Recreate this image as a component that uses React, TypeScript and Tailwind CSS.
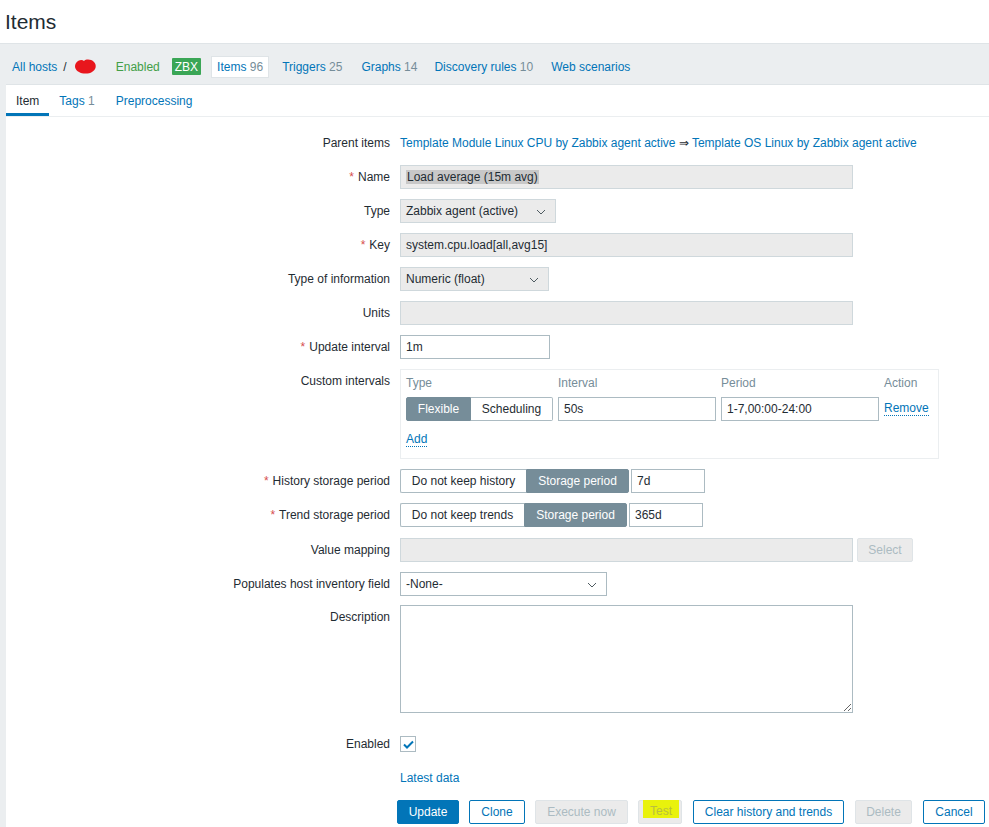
import React from "react";

const Chevron = () => (
  <svg width="10" height="6" viewBox="0 0 10 6" className="absolute right-[9px] top-[9px]">
    <path d="M1 1l4 4 4-4" fill="none" stroke="#4f5b61" strokeWidth="1" />
  </svg>
);

function Label({ text, req }: { text: string; req?: boolean }) {
  return (
    <div className="w-[384px] shrink-0 text-right leading-[24px]">
      {req && <span className="text-[#d64e4e] mr-[4px]">*</span>}
      {text}
    </div>
  );
}

function Row({ label, req, children, className }: { label: string; req?: boolean; children?: React.ReactNode; className?: string }) {
  return (
    <div className={"flex items-start " + (className ?? "")}>
      <Label text={label} req={req} />
      <div className="ml-[10px] flex items-start">{children}</div>
    </div>
  );
}

function ReadInput({ w, children }: { w: string; children?: React.ReactNode }) {
  return (
    <div className={`${w} h-[24px] bg-[#ebebeb] border border-[#cfd8dc] px-[5px] leading-[22px]`}>{children}</div>
  );
}

function Select({ w, value, ro }: { w: string; value: string; ro?: boolean }) {
  return (
    <div
      className={`${w} relative h-[24px] border ${ro ? "bg-[#ebebeb] border-[#cfd8dc]" : "bg-white border-[#acbbc2]"} px-[5px] leading-[22px]`}
    >
      {value}
      <Chevron />
    </div>
  );
}

function Segmented({ left, right, lw, rw }: { left: string; right: string; lw: string; rw: string }) {
  return (
    <div className="flex h-[24px]">
      <div className={`${lw} h-full border border-[#acbbc2] border-r-0 bg-white text-center leading-[22px] rounded-l-[2px]`}>{left}</div>
      <div className={`${rw} h-full border border-[#768d99] bg-[#768d99] text-white text-center leading-[22px] rounded-r-[2px]`}>{right}</div>
    </div>
  );
}

function Btn({ w, kind, children }: { w: string; kind: "primary" | "alt" | "disabled"; children: React.ReactNode }) {
  const cls =
    kind === "primary"
      ? "bg-[#0275b8] border-[#0275b8] text-white"
      : kind === "alt"
      ? "bg-white border-[#0275b8] text-[#0275b8]"
      : "bg-[#ebebeb] border-[#dfe4e7] text-[#acbbc2]";
  return <div className={`${w} h-[24px] border rounded-[2px] text-center leading-[22px] ${cls}`}>{children}</div>;
}

export default function App() {
  return (
    <div className="w-[989px] h-[827px] overflow-hidden bg-[#ebeef0] font-['Liberation_Sans',Arial,sans-serif] text-[12px] text-[#1f2c33]">
      {/* Header */}
      <div className="h-[44px] bg-white border-b border-[#dfe4e7] flex items-center pl-[5px]">
        <h1 className="text-[21px] leading-none">Items</h1>
      </div>

      {/* Host navigation */}
      <div className="h-[40px] flex items-center pl-[12px] pt-[5px]">
        <a className="text-[#0275b8]">All hosts</a>
        <span className="ml-[6px] text-[#1f2c33]">/</span>
        <svg width="24" height="18" viewBox="0 0 24 18" className="ml-[6px]">
          <path
            d="M3 5c2-3 6-4 8-2 2-2 7-2 10 1 3 3 2 8-2 10-3 2-10 2-13 0C2 12 1 8 3 5z"
            fill="#e8161d"
          />
        </svg>
        <span className="ml-[19px] text-[#429e47]">Enabled</span>
        <span className="ml-[12px] h-[17px] px-[3px] text-white text-[12px] leading-[18px] rounded-[1px] bg-[#3aa656]">ZBX</span>
        <div className="ml-[10px] h-[22px] bg-white border border-[#dfe4e7] px-[5px] leading-[20px]">
          <span className="text-[#0275b8]">Items</span> <span className="text-[#768d99]">96</span>
        </div>
        <span className="ml-[13px] text-[#0275b8]">Triggers <span className="text-[#768d99]">25</span></span>
        <span className="ml-[19px] text-[#0275b8]">Graphs <span className="text-[#768d99]">14</span></span>
        <span className="ml-[17px] text-[#0275b8]">Discovery rules <span className="text-[#768d99]">10</span></span>
        <span className="ml-[18px] text-[#0275b8]">Web scenarios</span>
      </div>

      {/* Content panel */}
      <div className="ml-[6px] h-full bg-white border-t border-[#dfe4e7]">
        {/* Tabs */}
        <div className="flex h-[32px] border-b border-[#ebeef0]">
          <div className="px-[10px] pt-[3px] leading-[26px] border-b-[3px] border-[#0275b8]">Item</div>
          <div className="px-[10px] pt-[3px] leading-[26px] text-[#0275b8]">
            Tags <span className="text-[#768d99]">1</span>
          </div>
          <div className="px-[11px] pt-[3px] leading-[26px] text-[#0275b8]">Preprocessing</div>
        </div>

        {/* Form */}
        <div className="flex flex-col gap-[10px] pt-[14px]">
          <Row label="Parent items">
            <div className="leading-[24px] text-[#0275b8]">
              Template Module Linux CPU by Zabbix agent active <span className="text-[#1f2c33]">⇒</span> Template OS Linux by Zabbix agent active
            </div>
          </Row>
          <Row label="Name" req>
            <ReadInput w="w-[453px]">
              <span className="bg-[#c8c8c8] px-[1px]">Load average (15m avg)</span>
            </ReadInput>
          </Row>
          <Row label="Type">
            <Select w="w-[156px]" value="Zabbix agent (active)" ro />
          </Row>
          <Row label="Key" req>
            <ReadInput w="w-[453px]">system.cpu.load[all,avg15]</ReadInput>
          </Row>
          <Row label="Type of information">
            <Select w="w-[149px]" value="Numeric (float)" ro />
          </Row>
          <Row label="Units">
            <ReadInput w="w-[453px]" />
          </Row>
          <Row label="Update interval" req>
            <div className="w-[150px] h-[24px] border border-[#acbbc2] px-[5px] leading-[22px]">1m</div>
          </Row>
          <Row label="Custom intervals">
            <div className="w-[539px] h-[90px] border border-[#ebeef0] px-[5px] pt-[5px]">
              <div className="flex text-[#768d99] leading-[16px]">
                <div className="w-[152px]">Type</div>
                <div className="w-[163px]">Interval</div>
                <div className="w-[163px]">Period</div>
                <div>Action</div>
              </div>
              <div className="flex mt-[6px] h-[24px]">
                <div className="flex h-[24px]">
                  <div className="w-[65px] bg-[#768d99] border border-[#768d99] text-white text-center leading-[22px] rounded-l-[2px]">Flexible</div>
                  <div className="w-[82px] bg-white border border-[#acbbc2] border-l-0 text-center leading-[22px] rounded-r-[2px]">Scheduling</div>
                </div>
                <div className="ml-[5px] w-[158px] h-[24px] border border-[#acbbc2] px-[5px] leading-[22px]">50s</div>
                <div className="ml-[5px] w-[158px] h-[24px] border border-[#acbbc2] px-[5px] leading-[22px]">1-7,00:00-24:00</div>
                <div className="ml-[5px] leading-[23px]">
                  <span className="text-[#0275b8] border-b border-dotted border-[#0275b8]">Remove</span>
                </div>
              </div>
              <div className="mt-[10px] leading-[16px]">
                <span className="text-[#0275b8] border-b border-dotted border-[#0275b8]">Add</span>
              </div>
            </div>
          </Row>
          <Row label="History storage period" req>
            <Segmented left="Do not keep history" right="Storage period" lw="w-[126px]" rw="w-[103px]" />
            <div className="ml-[2px] w-[74px] h-[24px] border border-[#acbbc2] px-[5px] leading-[22px]">7d</div>
          </Row>
          <Row label="Trend storage period" req>
            <Segmented left="Do not keep trends" right="Storage period" lw="w-[124px]" rw="w-[103px]" />
            <div className="ml-[2px] w-[74px] h-[24px] border border-[#acbbc2] px-[5px] leading-[22px]">365d</div>
          </Row>
          <Row label="Value mapping" className="mt-[1px]">
            <ReadInput w="w-[453px]" />
            <div className="ml-[4px]">
              <Btn w="w-[56px]" kind="disabled">Select</Btn>
            </div>
          </Row>
          <Row label="Populates host inventory field">
            <Select w="w-[207px]" value="-None-" />
          </Row>
          <Row label="Description" className="-mt-[1px]">
            <textarea className="w-[453px] h-[108px] border border-[#acbbc2] bg-white resize-y block outline-none" />
          </Row>
          <Row label="Enabled" className="mt-[9px]">
            <div className="mt-[4px] w-[16px] h-[16px] border border-[#acbbc2] bg-white flex items-center justify-center">
              <svg width="11" height="9" viewBox="0 0 11 9">
                <path d="M1 4.5l3 3 6-6" fill="none" stroke="#0275b8" strokeWidth="2" />
              </svg>
            </div>
          </Row>
          <Row label="">
            <span className="leading-[24px] text-[#0275b8]">Latest data</span>
          </Row>
          <div className="flex ml-[391px]">
            <Btn w="w-[62px]" kind="primary">Update</Btn>
            <div className="ml-[10px]"><Btn w="w-[56px]" kind="alt">Clone</Btn></div>
            <div className="ml-[10px]"><Btn w="w-[93px]" kind="disabled">Execute now</Btn></div>
            <div className="ml-[10px] relative">
              <Btn w="w-[44px]" kind="disabled">Test</Btn>
              <span className="absolute left-[5px] top-0 w-[36px] h-[18px] bg-[#e9f20c] text-[#b8bf3f] text-center leading-[22px]">Test</span>
            </div>
            <div className="ml-[11px]"><Btn w="w-[151px]" kind="alt">Clear history and trends</Btn></div>
            <div className="ml-[11px]"><Btn w="w-[57px]" kind="disabled">Delete</Btn></div>
            <div className="ml-[11px]"><Btn w="w-[62px]" kind="alt">Cancel</Btn></div>
          </div>
        </div>
      </div>
    </div>
  );
}
